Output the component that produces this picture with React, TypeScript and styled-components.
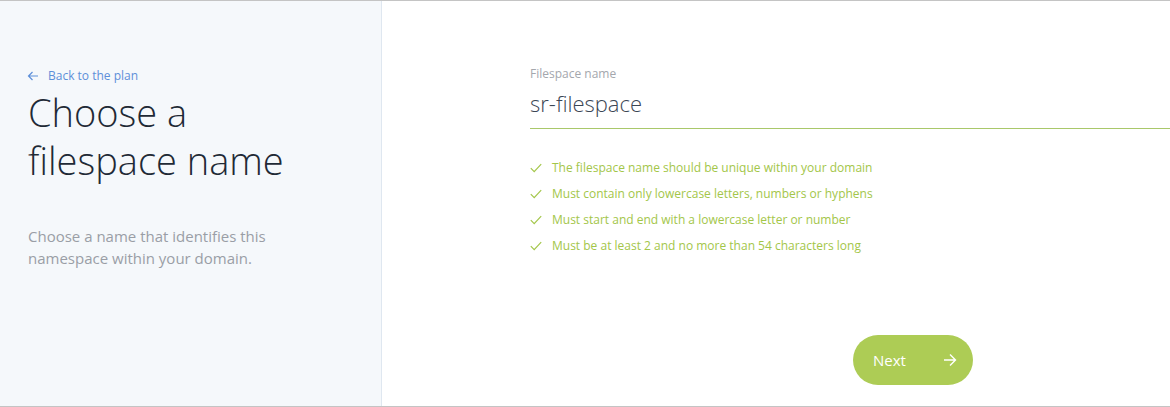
import React from "react";
import styled, { createGlobalStyle } from "styled-components";

const rules = [
  "The filespace name should be unique within your domain",
  "Must contain only lowercase letters, numbers or hyphens",
  "Must start and end with a lowercase letter or number",
  "Must be at least 2 and no more than 54 characters long",
];

export default function App() {
  return (
    <>
      <GlobalStyle />
      <Page>
        <Aside>
          <BackLink href="#">
            <svg width="12" height="12" viewBox="0 0 12 12" fill="none">
              <path d="M11 6H1.5M5.5 2L1.5 6l4 4" stroke="currentColor" strokeWidth="1.2" />
            </svg>
            Back to the plan
          </BackLink>
          <Title>
            Choose a
            <br />
            filespace name
          </Title>
          <Description>
            Choose a name that identifies this
            <br />
            namespace within your domain.
          </Description>
        </Aside>
        <Main>
          <Field>
            <Label>Filespace name</Label>
            <Input defaultValue="sr-filespace" />
          </Field>
          <RuleList>
            {rules.map((rule) => (
              <RuleItem key={rule}>
                <svg width="12" height="10" viewBox="0 0 12 10" fill="none">
                  <path d="M0.8 5.2l3.4 3.4L11.2 1.2" stroke="currentColor" strokeWidth="1.2" />
                </svg>
                {rule}
              </RuleItem>
            ))}
          </RuleList>
          <NextButton>
            Next
            <svg width="14" height="14" viewBox="0 0 14 14" fill="none">
              <path d="M1 7h11.5M7 1.5L12.5 7 7 12.5" stroke="currentColor" strokeWidth="1.4" />
            </svg>
          </NextButton>
        </Main>
      </Page>
    </>
  );
}

const GlobalStyle = createGlobalStyle`
  body {
    margin: 0;
    font-family: "Open Sans", "Liberation Sans", sans-serif;
    background: #ffffff;
  }
`;

const Page = styled.div`
  display: flex;
  height: 407px;
  box-sizing: border-box;
  border-top: 1px solid #c4c4c4;
  border-bottom: 1px solid #c4c4c4;
`;

const Aside = styled.aside`
  width: 382px;
  flex-shrink: 0;
  box-sizing: border-box;
  padding: 67px 28px 0 27px;
  background: #f5f8fb;
  border-right: 1px solid #dfe7f0;
`;

const BackLink = styled.a`
  display: flex;
  align-items: center;
  gap: 9px;
  font-size: 12px;
  line-height: 16px;
  color: #5d8fd9;
  text-decoration: none;
`;

const Title = styled.h1`
  margin: 4px 0 0 1px;
  font-size: 38px;
  line-height: 48px;
  font-weight: 300;
  color: #1f2a36;
`;

const Description = styled.p`
  margin: 41px 0 0 1px;
  font-size: 15px;
  line-height: 22px;
  color: #9a9ea6;
`;

const Main = styled.main`
  flex: 1;
  padding: 65px 0 0 148px;
`;

const Field = styled.div`
  display: flex;
  flex-direction: column;
  border-bottom: 1px solid #a9c86a;
`;

const Label = styled.label`
  font-size: 12px;
  line-height: 16px;
  color: #a4a7ad;
`;

const Input = styled.input`
  border: none;
  outline: none;
  padding: 0;
  margin: 6px 0 10px;
  height: 30px;
  font-family: inherit;
  font-size: 22px;
  font-weight: 300;
  color: #3b4654;
  background: transparent;
`;

const RuleList = styled.ul`
  list-style: none;
  margin: 31px 0 0;
  padding: 0;
  display: flex;
  flex-direction: column;
  gap: 10px;
`;

const RuleItem = styled.li`
  display: flex;
  align-items: center;
  gap: 10px;
  font-size: 12px;
  line-height: 16px;
  color: #a3c649;
`;

const NextButton = styled.button`
  margin: 81px 0 0 323px;
  width: 120px;
  height: 50px;
  border: none;
  border-radius: 25px;
  background: #adcc55;
  color: #ffffff;
  font-family: inherit;
  font-size: 15px;
  display: flex;
  align-items: center;
  justify-content: space-between;
  padding: 0 16px 0 20px;
  cursor: pointer;
`;
